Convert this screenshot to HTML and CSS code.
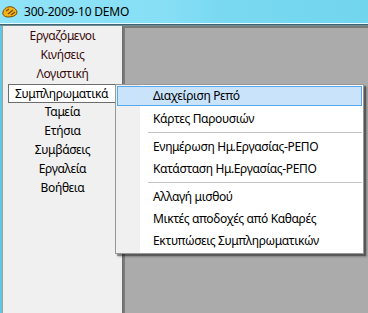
FILE: index.html
```html
<!DOCTYPE html>
<html lang="el">
<head>
  <meta charset="UTF-8" />
  <title>300-2009-10 DEMO</title>
  <link rel="stylesheet" href="styles.css">
</head>
<body>
  <div class="window">
    <div class="titlebar">
      <svg class="app-icon" width="16" height="12" viewBox="0 0 16 12">
        <path d="M1 6 C2 2 6 0 10 1 C13 2 15 4 15 7 C14 10 10 11 6 11 C3 11 0 9 1 6 Z" fill="#f2b21c" stroke="#7a4a00" stroke-width="1"/>
        <path d="M4 5 L7 3 M6 8 L11 4 M9 9 L13 6" stroke="#7a4a00" stroke-width="1.2" fill="none"/>
      </svg>
      <span class="title">300-2009-10 DEMO</span>
    </div>
    <div class="content">
      <div class="sidebar">
        <div class="nav-item dim">Εργαζόμενοι</div>
        <div class="nav-item dim">Κινήσεις</div>
        <div class="nav-item dim">Λογιστική</div>
        <div class="nav-item active">Συμπληρωματικά</div>
        <div class="nav-item">Ταμεία</div>
        <div class="nav-item">Ετήσια</div>
        <div class="nav-item">Συμβάσεις</div>
        <div class="nav-item">Εργαλεία</div>
        <div class="nav-item">Βοήθεια</div>
      </div>
      <div class="workspace"></div>
    </div>

    <div class="popup">
      <div class="menu-item hover">Διαχείριση Ρεπό</div>
      <div class="menu-item">Κάρτες Παρουσιών</div>
      <div class="menu-sep"></div>
      <div class="menu-item">Ενημέρωση Ημ.Εργασίας-ΡΕΠΟ</div>
      <div class="menu-item">Κατάσταση Ημ.Εργασίας-ΡΕΠΟ</div>
      <div class="menu-sep"></div>
      <div class="menu-item">Αλλαγή μισθού</div>
      <div class="menu-item">Μικτές αποδοχές από Καθαρές</div>
      <div class="menu-item">Εκτυπώσεις Συμπληρωματικών</div>
    </div>
  </div>
</body>
</html>
```

FILE: styles.css
```css
body {
  margin: 0;
  font-family: "Noto Sans", "Open Sans", sans-serif;
  font-size: 12px;
  letter-spacing: -0.35px;
  color: #000;
}

.window {
  position: relative;
  width: 368px;
  height: 313px;
  display: flex;
  flex-direction: column;
  overflow: hidden;
}

.titlebar {
  height: 23px;
  display: flex;
  align-items: center;
  gap: 6px;
  padding-left: 2px;
  background: linear-gradient(90deg, #90e3f8 0%, #86dff5 45%, #79d9f1 60%, #72d5ee 100%);
  border-bottom: 1px solid #e6fbff;
  box-shadow: 0 1px 0 #3f6570, 0 2px 0 #6e8b93;
}

.app-icon {
  margin-top: 1px;
}

.title {
  font-size: 12px;
  letter-spacing: -0.2px;
}

.content {
  flex: 1;
  display: flex;
  margin-top: 2px;
  border-left: 2px solid #5cc8e4;
}

.sidebar {
  width: 119px;
  background: #f0f0f0;
  border-left: 1px solid #a0a0a0;
  border-right: 1px solid #6d6d6d;
  padding-top: 1px;
  display: flex;
  flex-direction: column;
}

.nav-item {
  height: 19px;
  line-height: 18px;
  text-align: center;
}

.nav-item.dim {
  color: #3a0a0a;
}

.nav-item.active {
  margin-left: 5px;
  width: 103px;
  height: 17px;
  background: #fff;
  border: 1px solid #6d6d6d;
  line-height: 17px;
  text-align: left;
  padding-left: 6px;
  box-sizing: content-box;
}

.workspace {
  flex: 1;
  background: #ababab;
  border-left: 2px solid #7a7a7a;
  border-top: 2px solid #7a7a7a;
}

.popup {
  position: absolute;
  left: 115px;
  top: 84px;
  width: 245px;
  padding: 1px;
  background: linear-gradient(90deg, #f0f0f0 0, #f0f0f0 24px, #fff 24px);
  border: 1px solid #979797;
  box-shadow: 2px 2px 1px rgba(0, 0, 0, 0.35), 3px 3px 2px rgba(0, 0, 0, 0.2);
}

.menu-item {
  height: 22px;
  line-height: 20px;
  padding-left: 35px;
  box-sizing: border-box;
  border: 1px solid transparent;
}

.menu-item.hover {
  background: #c9e3fb;
  border-color: #59a8ee;
  height: 20px;
  line-height: 18px;
  margin-bottom: 2px;
}

.menu-sep {
  height: 6px;
  margin-left: 31px;
  background: linear-gradient(#fff 0, #fff 2px, #c5c5c5 2px, #c5c5c5 3px, #fff 3px);
}
```
